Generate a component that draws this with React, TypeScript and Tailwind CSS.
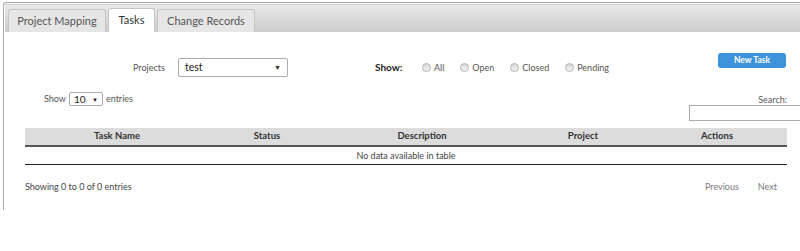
import React from 'react'

const cols = [
	{ name: 'Task Name', w: 'w-[184px]' },
	{ name: 'Status', w: 'w-[116px]' },
	{ name: 'Description', w: 'w-[194px]' },
	{ name: 'Project', w: 'w-[128px]' },
	{ name: 'Actions', w: 'w-[140px]' },
]

function Radio({ label }: { label: string }) {
	return (
		<label className="flex items-center gap-[3px]">
			<span className="w-[9px] h-[9px] rounded-full border border-[#b5b5b5] bg-gradient-to-b from-[#d6d6d6] to-[#f4f4f4]"></span>
			<span>{label}</span>
		</label>
	)
}

function App() {
	return (
		<div className="w-[800px] h-[251px] overflow-hidden bg-white font-['Lato',sans-serif] text-[9px] text-[#333]">
			<div className="ml-[3px] mt-[2px] w-[820px] h-[208px] border-l border-t border-[#aaaaaa] rounded-tl-[3px] pt-[1px] pl-[1px]">
				{/* tabs */}
				<div className="h-[28px] flex items-end gap-[2px] pl-[3px] border-t border-b border-[#d0d0d0] bg-gradient-to-b from-[#e9e9e9] to-[#cdcdcd]">
					<div className="h-[23px] w-[98px] flex items-center justify-center border border-b-0 border-[#c5c5c5] rounded-t-[3px] bg-[#e6e6e6] text-[#555] text-[11px] mb-[-1px]">Project Mapping</div>
					<div className="h-[24px] w-[47px] flex items-center justify-center border border-b-0 border-[#c5c5c5] rounded-t-[3px] bg-white text-[#333] text-[11px] mb-[-1px]">Tasks</div>
					<div className="h-[23px] w-[98px] flex items-center justify-center border border-b-0 border-[#c5c5c5] rounded-t-[3px] bg-[#e6e6e6] text-[#555] text-[11px] mb-[-1px]">Change Records</div>
				</div>

				<div className="w-[782px] pl-[20px]">
					{/* filter row */}
					<div className="flex items-start mt-[21px] h-[24px]">
						<div className="flex items-center mt-[5px]">
							<span className="ml-[108px] w-[30px] text-[#555]">Projects</span>
							<div className="ml-[15px] w-[110px] h-[19px] border border-[#aaaaaa] rounded-[2px] flex items-center justify-between px-[6px] text-[10.5px] text-[#222]">
								<span>test</span>
								<span className="text-[7px] text-[#333]">▼</span>
							</div>
							<span className="ml-[87px] w-[29px] font-bold text-[#222] text-[10px]">Show:</span>
							<div className="ml-[18px] flex items-center gap-[16px] text-[#555] text-[9px]">
								<Radio label="All" />
								<Radio label="Open" />
								<Radio label="Closed" />
								<Radio label="Pending" />
							</div>
						</div>
						<div className="ml-auto mr-[1px] w-[68px] h-[15px] shrink-0 rounded-[3px] bg-[#3d92dc] text-white font-bold text-[8.5px] flex items-center justify-center">New Task</div>
					</div>

					{/* show entries / search */}
					<div className="flex items-start mt-[15px] h-[36px]">
						<div className="flex items-center ml-[19px] gap-[3px] text-[#555]">
							<span>Show</span>
							<div className="w-[34px] h-[14px] border border-[#aaaaaa] rounded-[2px] flex items-center justify-between px-[4px] text-[10px] text-[#222]">
								<span>10</span>
								<span className="text-[6px]">▼</span>
							</div>
							<span>entries</span>
						</div>
						<div className="ml-auto mr-[-20px] mt-[1px] flex flex-col items-end">
							<span className="mr-[20px] h-[12px] text-[#555]">Search:</span>
							<div className="w-[118px] h-[16px] border border-[#aaaaaa]"></div>
						</div>
					</div>

					{/* table */}
					<div className="w-[762px]">
						<div className="flex h-[19px] bg-[#dcdcdc] border-b-2 border-[#555] font-bold text-[#333] text-[9.5px]">
							{cols.map(c => (
								<div key={c.name} className={`${c.w} flex items-center justify-center`}>{c.name}</div>
							))}
						</div>
						<div className="h-[18px] flex items-center justify-center border-b border-[#222] text-[#444]">No data available in table</div>
					</div>

					{/* footer */}
					<div className="w-[762px] flex items-center mt-[15px] text-[#444]">
						<span>Showing 0 to 0 of 0 entries</span>
						<div className="ml-auto flex gap-[19px] mr-[10px] text-[#777]">
							<span>Previous</span>
							<span>Next</span>
						</div>
					</div>
				</div>
			</div>
		</div>
	)
}

export default App
